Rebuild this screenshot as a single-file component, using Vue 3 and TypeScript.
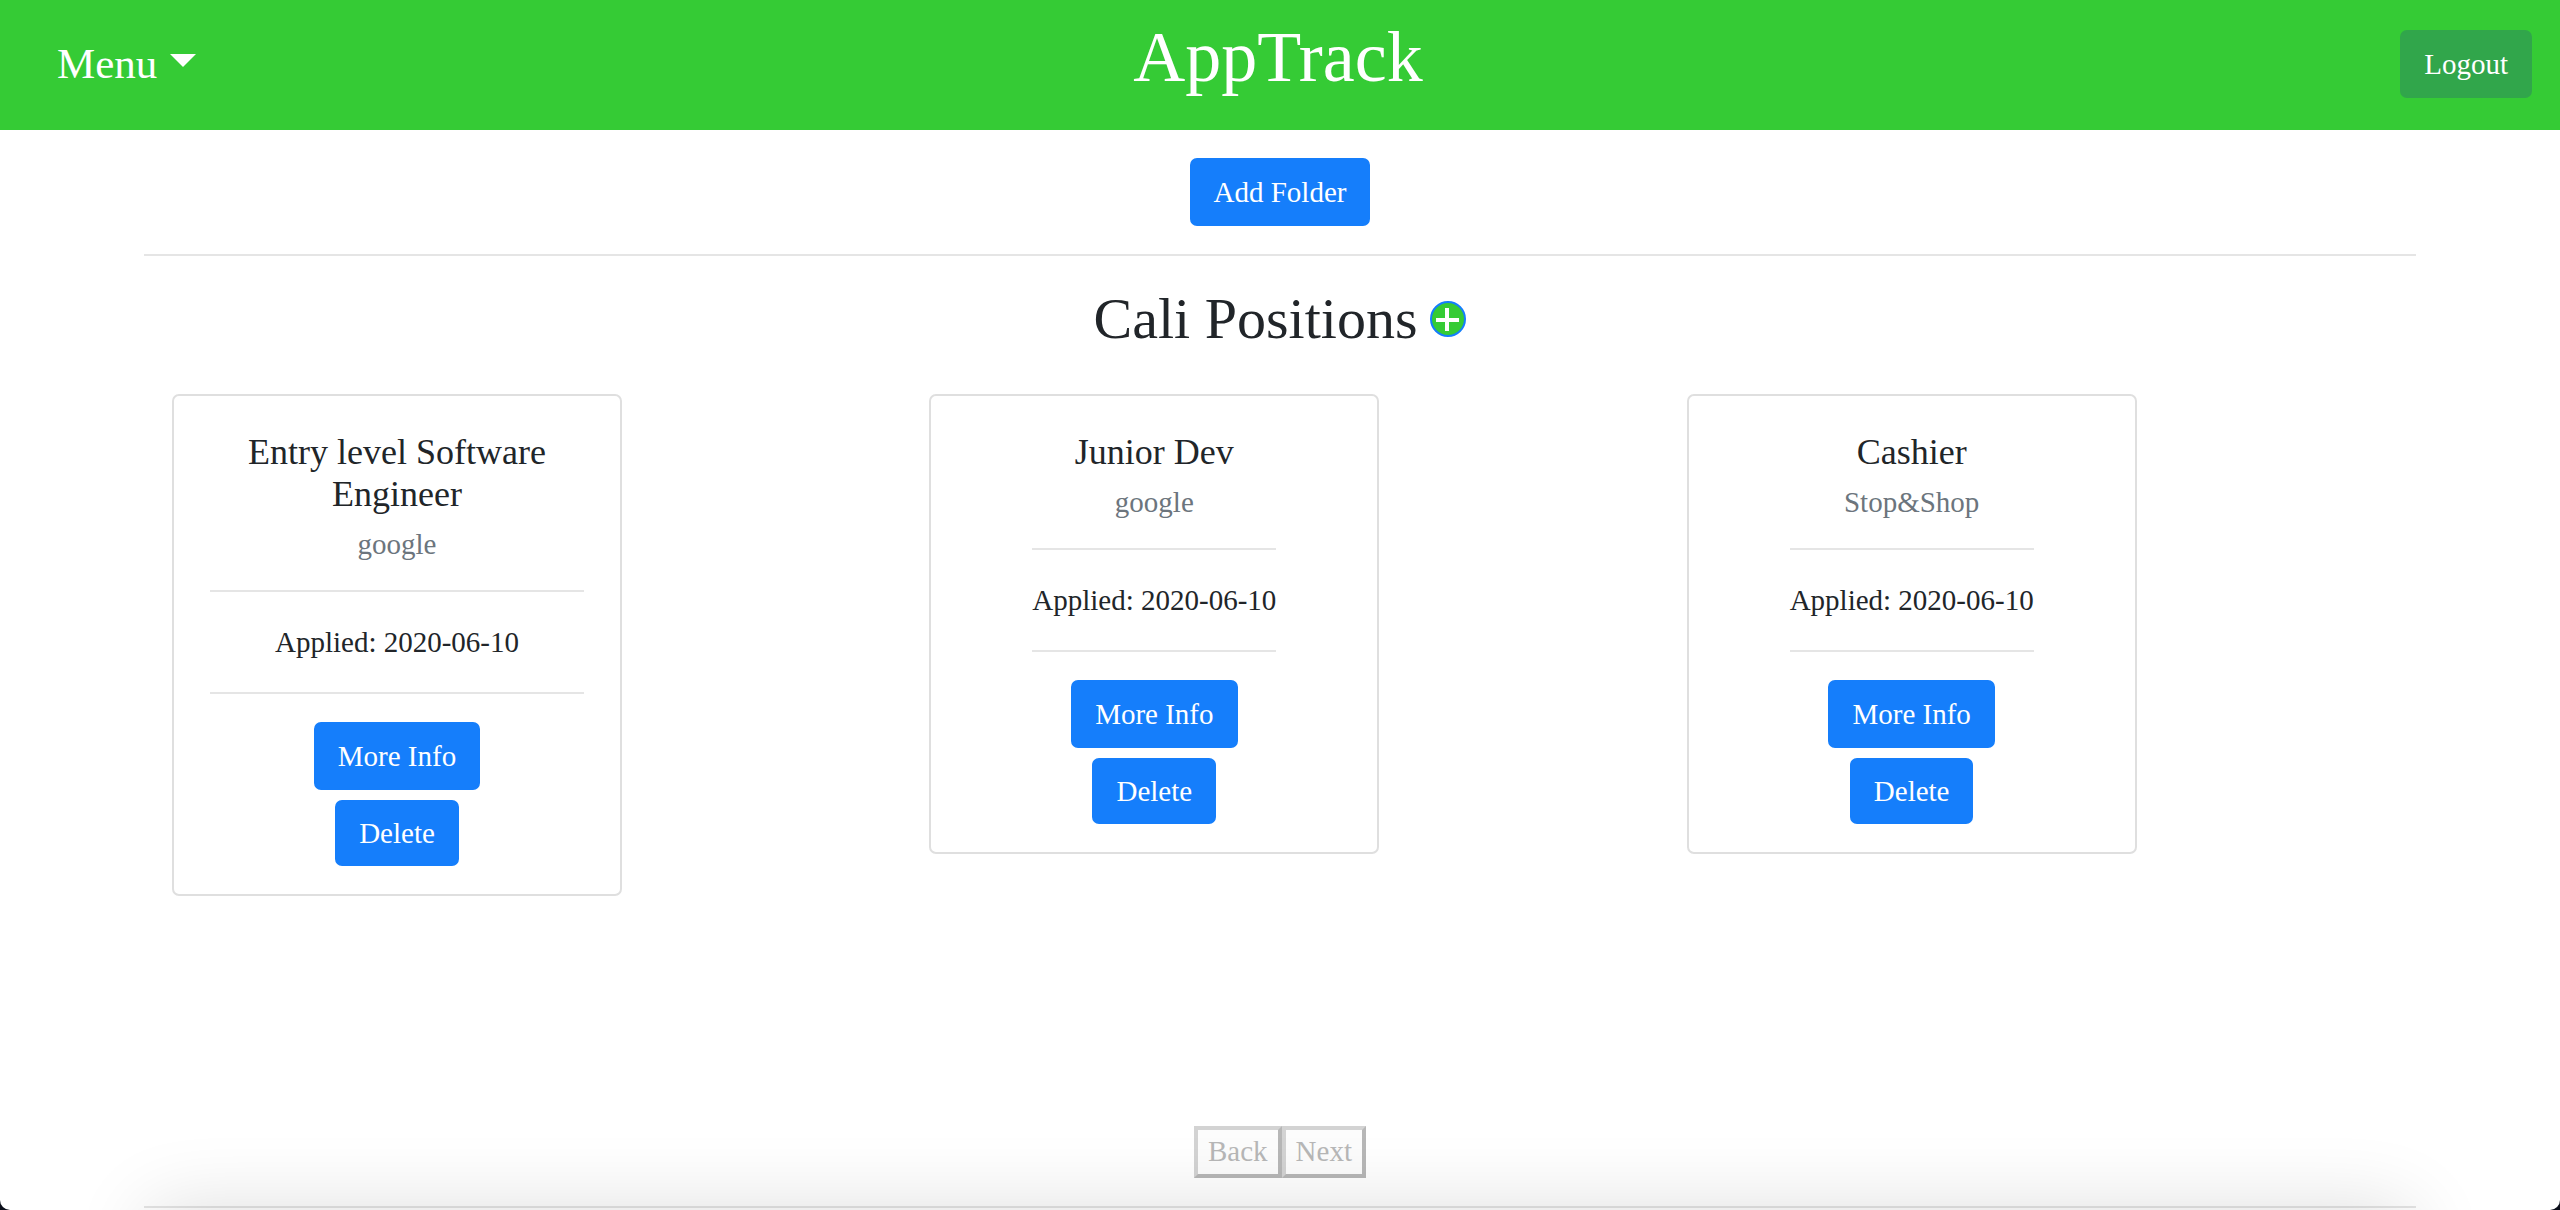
<script setup lang="ts">
interface Position {
  id: number
  title: string
  company: string
  applied: string
}

interface Folder {
  name: string
  positions: Position[]
}

const folder: Folder = {
  name: 'Cali Positions',
  positions: [
    { id: 1, title: 'Entry level Software Engineer', company: 'google', applied: '2020-06-10' },
    { id: 2, title: 'Junior Dev', company: 'google', applied: '2020-06-10' },
    { id: 3, title: 'Cashier', company: 'Stop&Shop', applied: '2020-06-10' },
  ],
}
</script>

<template>
  <div class="page">
    <header class="navbar">
      <button type="button" class="menu">Menu<span class="caret"></span></button>
      <h1 class="brand">AppTrack</h1>
      <button type="button" class="btn btn-success">Logout</button>
    </header>

    <main class="content">
      <button type="button" class="btn add-folder">Add Folder</button>
      <hr class="rule" />

      <section class="folder">
        <div class="folder-head">
          <h2 class="folder-name">{{ folder.name }}</h2>
          <button type="button" class="add-position" aria-label="Add position">
            <svg viewBox="0 0 36 36" width="36" height="36" aria-hidden="true">
              <circle cx="18" cy="18" r="17" fill="#35cb35" stroke="#157efb" stroke-width="2" />
              <path d="M6 19H29M17 7V30" stroke="#fff" stroke-width="4" />
            </svg>
          </button>
        </div>

        <div class="cards">
          <article v-for="position in folder.positions" :key="position.id" class="card">
            <div class="card-body">
              <h5 class="card-title">{{ position.title }}</h5>
              <h6 class="card-subtitle">{{ position.company }}</h6>
              <hr class="rule" />
              <p class="card-text">Applied: {{ position.applied }}</p>
              <hr class="rule" />
              <a href="#" class="btn">More Info</a>
              <button type="button" class="btn btn-delete">Delete</button>
            </div>
          </article>
        </div>

        <nav class="pager" aria-label="Pages">
          <button type="button" class="pager-btn" disabled>Back</button>
          <button type="button" class="pager-btn" disabled>Next</button>
        </nav>
      </section>
      <hr class="rule" />
    </main>

    <div class="bottom-shadow"></div>
  </div>
</template>

<style>
html {
  background: #0a0e1a;
}

body {
  margin: 0;
}
</style>

<style scoped>
.page {
  position: relative;
  box-sizing: border-box;
  min-height: 100vh;
  overflow: hidden;
  border-radius: 0 0 10px 10px;
  background: #fff;
  color: #212529;
  font-family: "Liberation Serif", "Times New Roman", serif;
  font-size: 29px;
  line-height: 44px;
}

.navbar {
  display: grid;
  grid-template-columns: 1fr auto 1fr;
  align-items: center;
  padding: 14px 28px 16px 24px;
  background: #35cb35;
  color: #fff;
}

.brand {
  margin: 0 0 14px;
  font-size: 72px;
  font-weight: 400;
  line-height: 86px;
}

.menu {
  display: flex;
  align-items: center;
  gap: 13px;
  justify-self: start;
  margin: 0;
  padding: 0 33px;
  border: 0;
  background: none;
  color: inherit;
  font-family: inherit;
  font-size: 43px;
  line-height: 64px;
}

.caret {
  border: 13px solid transparent;
  border-top-color: #fff;
  border-bottom: 0;
  margin-bottom: 8px;
}

.btn {
  box-sizing: border-box;
  display: block;
  margin: 0;
  padding: 11px 22px;
  border: 2px solid #157efb;
  border-radius: 7px;
  background: #157efb;
  color: #fff;
  font-family: inherit;
  font-size: 29px;
  line-height: 42px;
  text-decoration: none;
}

.btn-success {
  justify-self: end;
  border-color: #31a64b;
  background: #31a64b;
}

.content {
  display: flex;
  flex-direction: column;
  align-items: stretch;
  padding: 28px 144px 0;
}

.add-folder {
  align-self: center;
}

.rule {
  align-self: stretch;
  height: 2px;
  margin: 28px 0;
  border: 0;
  background: #e5e5e5;
}

.content > .rule:last-child {
  margin-bottom: 0;
}

.folder-head {
  display: flex;
  align-items: center;
  justify-content: center;
  gap: 13px;
  margin-bottom: 40px;
}

.folder-name {
  margin: 0;
  font-size: 58px;
  font-weight: 400;
  line-height: 70px;
}

.add-position {
  display: flex;
  margin: 0;
  padding: 0;
  border: 0;
  background: none;
}

.cards {
  display: grid;
  grid-template-columns: repeat(3, 1fr);
  align-items: start;
  min-height: 732px;
}

.card {
  box-sizing: border-box;
  display: flex;
  flex-direction: column;
  align-items: center;
  width: 450px;
  max-width: 100%;
  margin-left: 28px;
  padding: 35px 36px 28px;
  border: 2px solid #dfdfdf;
  border-radius: 7px;
  text-align: center;
}

.card-body {
  display: flex;
  flex-direction: column;
  align-items: center;
}

.card-title {
  margin: 0 0 12px;
  font-size: 36px;
  font-weight: 400;
  line-height: 42px;
}

.card-subtitle {
  margin: 0;
  color: #6c757d;
  font-size: 29px;
  font-weight: 400;
  line-height: 35px;
}

.card-text {
  margin: 0;
}

.btn-delete {
  margin-top: 10px;
  padding: 10px 22px;
}

.pager {
  display: flex;
  justify-content: center;
}

.pager-btn {
  margin: 0;
  padding: 1px 10px 3px;
  border: 4px solid;
  border-color: #d3d3d3 #b7b7b7 #b7b7b7 #d3d3d3;
  background: #fcfcfc;
  color: #b7b7b7;
  font-family: inherit;
  font-size: 29px;
  line-height: 40px;
}

/* Soft shade that rises over the lower edge of the window */
.bottom-shadow {
  position: absolute;
  top: 100%;
  right: 150px;
  left: 150px;
  height: 200px;
  box-shadow: 0 0 80px rgba(0, 0, 0, 0.14);
  pointer-events: none;
}
</style>
